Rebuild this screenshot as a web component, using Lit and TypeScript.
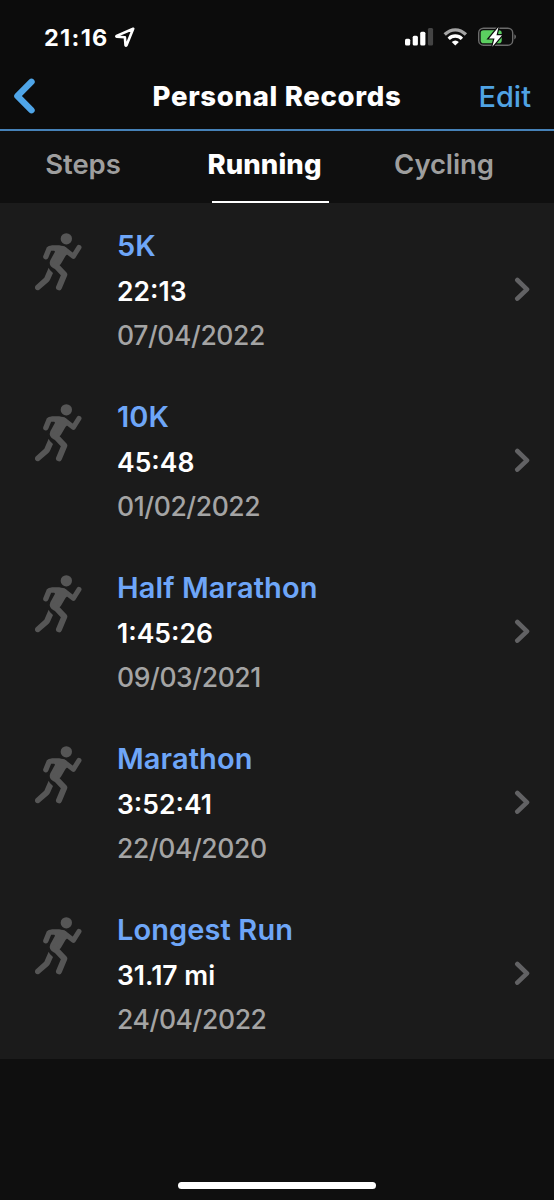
import { LitElement, html, css, svg } from "lit";
import { customElement, property } from "lit/decorators.js";

interface PersonalRecord {
  title: string;
  value: string;
  date: string;
}

const RECORDS: PersonalRecord[] = [
  { title: "5K", value: "22:13", date: "07/04/2022" },
  { title: "10K", value: "45:48", date: "01/02/2022" },
  { title: "Half Marathon", value: "1:45:26", date: "09/03/2021" },
  { title: "Marathon", value: "3:52:41", date: "22/04/2020" },
  { title: "Longest Run", value: "31.17 mi", date: "24/04/2022" },
];

const runner = svg`
  <circle cx="139" cy="55.500" r="17"/>
  <path d="M77.500 109L87 86Q89 83.500 94 83.500H118" fill="none" stroke="currentColor" stroke-width="16" stroke-linecap="round" stroke-linejoin="round"/>
  <path d="M132 86L160 108L177 81" fill="none" stroke="currentColor" stroke-width="15" stroke-linecap="round" stroke-linejoin="round"/>
  <path d="M94 75.500H118Q131 76 139 82L146 98L137 106L122 132L103 145Q84 136 91 120L105 94Z"/>
  <path d="M103 131L133 163L117 201" fill="none" stroke="currentColor" stroke-width="18" stroke-linecap="round" stroke-linejoin="round"/>
  <path d="M86 142Q88 149 99 158L90 178Q88 182 85 185L57 209Q50 212 46 206Q43 200 48 195L73 172Z"/>`;

@customElement("record-row")
export class RecordRow extends LitElement {
  @property({ attribute: false }) record!: PersonalRecord;

  static styles = css`
    :host {
      display: flex;
      box-sizing: border-box;
      height: 171px;
      padding: 19px 24px 18px 35px;
    }
    .runner {
      flex: none;
      width: 47px;
      height: 58px;
      margin-top: 10px;
      color: #565656;
      fill: currentColor;
    }
    .text {
      flex: 1;
      margin-left: 35px;
      font-weight: 600;
      white-space: nowrap;
    }
    .title {
      font-size: 29px;
      line-height: 45px;
      color: #6ea6f8;
      letter-spacing: 0.1px;
    }
    .value {
      font-size: 26.5px;
      line-height: 46px;
      color: #fff;
      letter-spacing: 0;
    }
    .date {
      font-size: 26.5px;
      font-weight: 500;
      line-height: 43px;
      color: #a4a4a4;
      letter-spacing: -0.4px;
    }
    .chevron {
      flex: none;
      width: 16px;
      height: 25px;
      margin-top: 54px;
    }
  `;

  render() {
    return html`
      <svg class="runner" viewBox="45 38 141 174">${runner}</svg>
      <div class="text">
        <div class="title">${this.record.title}</div>
        <div class="value">${this.record.value}</div>
        <div class="date">${this.record.date}</div>
      </div>
      <svg class="chevron" viewBox="0 0 16 25" fill="none" stroke="#626264" stroke-width="4.600" stroke-linecap="round" stroke-linejoin="round">
        <path d="M3.300 3L13 12.300L3.300 21.600"/>
      </svg>
    `;
  }
}

@customElement("app-root")
export class AppRoot extends LitElement {
  static styles = css`
    :host {
      display: flex;
      flex-direction: column;
      box-sizing: border-box;
      height: 1200px;
      background: #0f0f0f;
      color: #fff;
      font-family: Inter, "Liberation Sans", sans-serif;
    }
    .status {
      display: flex;
      align-items: center;
      box-sizing: border-box;
      height: 65px;
      padding: 9px 37px 0 44px;
      background: #0c0c0c;
    }
    .time {
      font-size: 23.5px;
      font-weight: 700;
      line-height: 30px;
      letter-spacing: 1.3px;
      width: 71px;
      padding-top: 1px;
    }
    .location {
      width: 20px;
      height: 21px;
    }
    .indicators {
      width: 112px;
      height: 22px;
      margin-left: auto;
    }
    .nav {
      display: grid;
      grid-template-columns: 80px 1fr 80px;
      align-items: center;
      box-sizing: border-box;
      height: 66px;
      padding: 0 23px 3px 13px;
      border-bottom: 2px solid #4682b8;
      background: #0c0c0c;
    }
    .back {
      width: 23px;
      height: 36px;
    }
    .heading {
      margin: 1px 0 0 10px;
      font-size: 27.5px;
      font-weight: 800;
      letter-spacing: 0.68px;
      text-align: center;
      white-space: nowrap;
    }
    .edit {
      margin-top: 1px;
      font-size: 29px;
      font-weight: 500;
      color: #50a3e4;
      text-align: right;
    }
    .tabs {
      display: grid;
      grid-template-columns: 166px 197px 162px;
      height: 72px;
      color: #9e9e9e;
      font-size: 27.5px;
      font-weight: 600;
      letter-spacing: -0.1px;
      line-height: 66px;
      text-align: center;
    }
    .active {
      display: flex;
      flex-direction: column;
      align-items: center;
      color: #fff;
      font-weight: 800;
      letter-spacing: 0.1px;
    }
    .underline {
      width: 117px;
      height: 2px;
      margin: 4px 0 0 11px;
      background: #fff;
    }
    .list {
      padding-top: 1px;
      background: #1b1b1b;
    }
    .home {
      width: 198px;
      height: 7px;
      margin: auto auto 11px;
      border-radius: 4px;
      background: #fff;
    }
  `;

  render() {
    return html`
      <div class="status">
        <span class="time">21:16</span>
        <svg class="location" viewBox="0 0 20 21" fill="none" stroke="#fff" stroke-width="2.600" stroke-linejoin="round">
          <path d="M18.200 1.800L1.600 8.900Q1 9.500 1.800 9.700L9.900 10.300L10.500 18.200Q10.800 19.300 11.500 18.300Z"/>
        </svg>
        <svg class="indicators" viewBox="405 26 112 22">
          <g fill="#fff">
            <rect x="405" y="38.700" width="5.200" height="6.800" rx="1.500"/>
            <rect x="412.700" y="35.700" width="5.200" height="9.800" rx="1.500"/>
            <rect x="420.200" y="31.800" width="5.200" height="13.700" rx="1.500"/>
            <rect x="427.900" y="28" width="5.200" height="17.500" rx="1.500" fill="#444"/>
          </g>
          <g fill="none" stroke-width="3.300">
            <path d="M444.700 34.500Q449.500 29.800 455.300 29.800T465.900 34.500" stroke="#a3a3a3"/>
            <path d="M448.700 38.800Q451.500 36 455.300 36T461.900 38.800" stroke="#fff"/>
          </g>
          <path d="M455.300 45.500L451.700 41.900Q455.300 38.900 458.900 41.900Z" fill="#fff"/>
          <rect x="478.700" y="28.200" width="34" height="17" rx="4.800" fill="none" stroke="#6b6b6b" stroke-width="1.400"/>
          <path d="M514.300 34.200Q516 35 516 36.800T514.300 39.400Z" fill="#6b6b6b"/>
          <rect x="480.700" y="30.200" width="21" height="13" rx="2.800" fill="#5bcf60"/>
          <path d="M498.500 27L489 38.400H494.500L492.300 46.800L502 35.300H496.500Z" fill="#fff" stroke="#0c0c0c" stroke-width="2.400" paint-order="stroke"/>
        </svg>
      </div>
      <div class="nav">
        <svg class="back" viewBox="0 0 23 36" fill="none" stroke="#4fa5e8" stroke-width="6.400" stroke-linecap="round" stroke-linejoin="round">
          <path d="M18.500 3.800L4.400 18L18.500 32.200"/>
        </svg>
        <h1 class="heading">Personal Records</h1>
        <span class="edit">Edit</span>
      </div>
      <div class="tabs">
        <span>Steps</span>
        <div class="active"><span>Running</span><span class="underline"></span></div>
        <span>Cycling</span>
      </div>
      <div class="list">
        ${RECORDS.map((r) => html`<record-row .record=${r}></record-row>`)}
      </div>
      <div class="home"></div>
    `;
  }
}
